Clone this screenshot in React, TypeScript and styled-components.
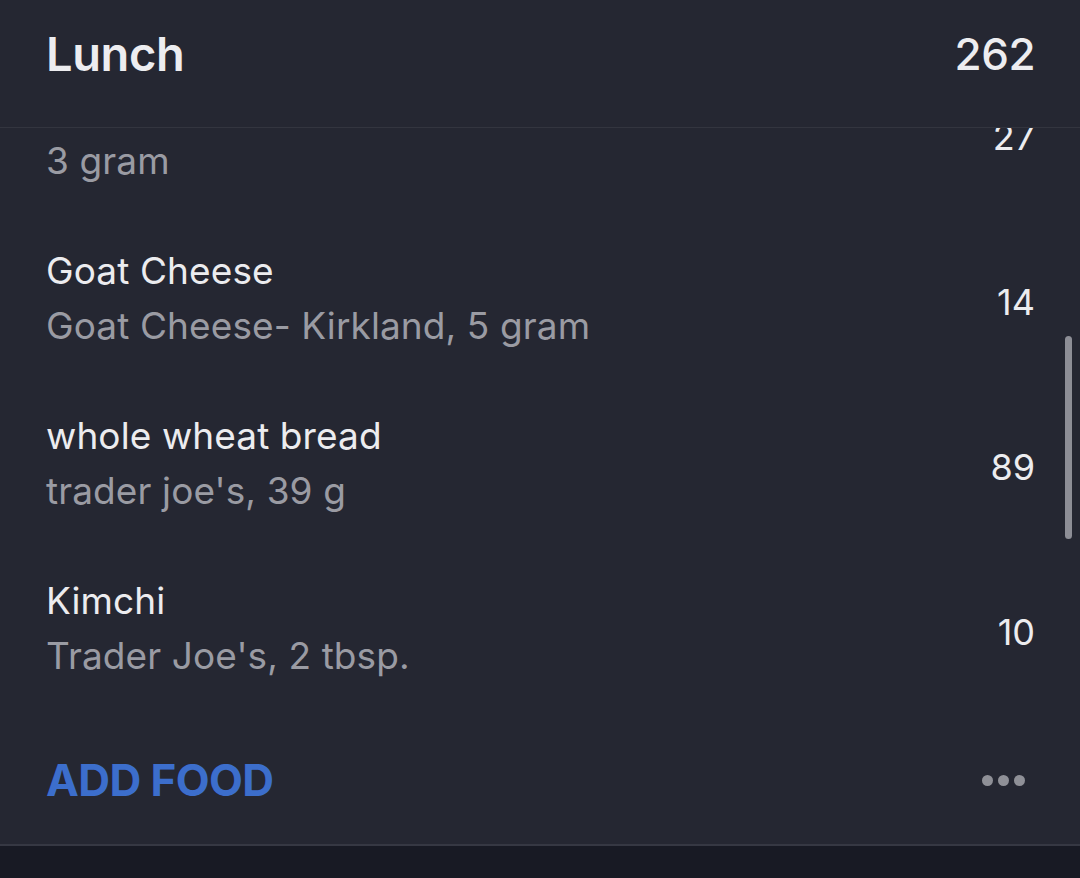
import React from 'react';
import styled, { createGlobalStyle } from 'styled-components';

const GlobalStyle = createGlobalStyle`
  html, body {
    margin: 0;
    padding: 0;
    background: #181a24;
  }
  body {
    font-family: Inter, "Noto Sans", "Liberation Sans", sans-serif;
    -webkit-font-smoothing: antialiased;
  }
`;

const Screen = styled.div`
  width: 1080px;
  height: 878px;
  display: flex;
  flex-direction: column;
  background: #181a24;
  overflow: hidden;
`;

const Card = styled.section`
  background: #252732;
  display: flex;
  flex-direction: column;
  border-bottom: 2px solid #363843;
`;

const Header = styled.header`
  height: 128px;
  box-sizing: border-box;
  padding: 0 45px 20px 46px;
  display: flex;
  align-items: center;
  justify-content: space-between;
  border-bottom: 1px solid #33353f;
  color: #ededf0;
`;

const Title = styled.h2`
  margin: 0;
  font-size: 47px;
  font-weight: 600;
  letter-spacing: -0.4px;
`;

const Total = styled.span`
  font-size: 44px;
  font-weight: 500;
  letter-spacing: -0.5px;
`;

const Viewport = styled.div`
  position: relative;
  height: 582px;
  overflow: hidden;
`;

const List = styled.ul<{ $offset: number }>`
  list-style: none;
  margin: 0;
  padding: 0;
  transform: translateY(${p => -p.$offset}px);
`;

const Row = styled.li`
  height: 165px;
  padding: 0 45px 0 46px;
  display: flex;
  align-items: center;
  justify-content: space-between;
`;

const Info = styled.div`
  display: flex;
  flex-direction: column;
  gap: 12px;
`;

const Name = styled.div`
  font-size: 37px;
  letter-spacing: 0.1px;
  color: #ececef;
  line-height: 43px;
`;

const Detail = styled.div`
  font-size: 37px;
  letter-spacing: 0.1px;
  color: #9a9ba3;
  line-height: 43px;
`;

const Calories = styled.div`
  font-size: 36px;
  color: #ececef;
  margin-top: 8px;
`;

const Scrollbar = styled.div`
  position: absolute;
  right: 8px;
  top: 208px;
  width: 7px;
  height: 203px;
  border-radius: 4px;
  background: #8d8e96;
`;

const Footer = styled.footer`
  height: 134px;
  padding: 0 55px 0 46px;
  display: flex;
  align-items: center;
  justify-content: space-between;
`;

const AddButton = styled.button`
  background: none;
  border: none;
  padding: 0;
  margin-top: 6px;
  font-family: inherit;
  font-size: 44px;
  font-weight: 700;
  letter-spacing: -0.6px;
  color: #3c6ecc;
  cursor: pointer;
`;

const Dots = styled.div`
  display: flex;
  gap: 5px;
  margin-top: 6px;
`;

const Dot = styled.span`
  width: 11px;
  height: 11px;
  border-radius: 50%;
  background: #8f9097;
`;

const foods = [
  { name: 'Lentils', detail: '3 gram', kcal: 27 },
  { name: 'Goat Cheese', detail: 'Goat Cheese- Kirkland, 5 gram', kcal: 14 },
  { name: 'whole wheat bread', detail: "trader joe's, 39 g", kcal: 89 },
  { name: 'Kimchi', detail: "Trader Joe's, 2 tbsp.", kcal: 10 },
];

export default function App() {
  return (
    <>
      <GlobalStyle />
      <Screen>
        <Card>
          <Header>
            <Title>Lunch</Title>
            <Total>262</Total>
          </Header>
          <Viewport>
            <List $offset={78}>
              {foods.map(f => (
                <Row key={f.name}>
                  <Info>
                    <Name>{f.name}</Name>
                    <Detail>{f.detail}</Detail>
                  </Info>
                  <Calories>{f.kcal}</Calories>
                </Row>
              ))}
            </List>
            <Scrollbar />
          </Viewport>
          <Footer>
            <AddButton>ADD FOOD</AddButton>
            <Dots>
              <Dot />
              <Dot />
              <Dot />
            </Dots>
          </Footer>
        </Card>
      </Screen>
    </>
  );
}
